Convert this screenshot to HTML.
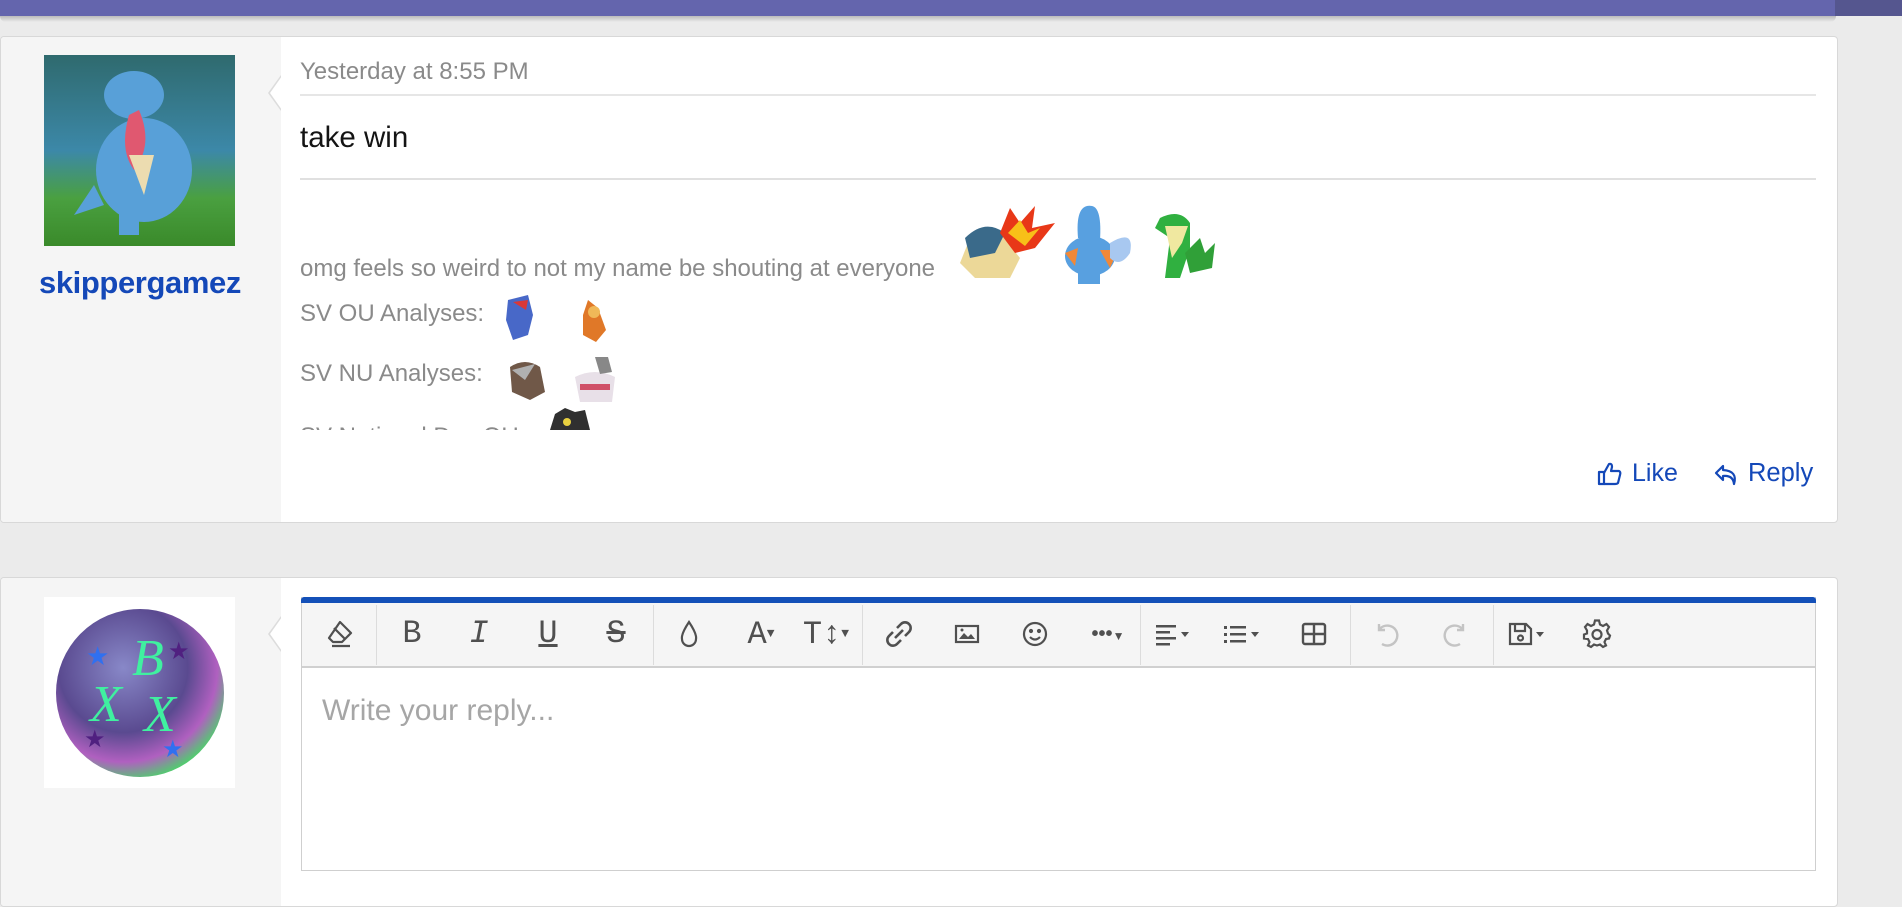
<!DOCTYPE html>
<html><head><meta charset="utf-8"><style>
*{margin:0;padding:0;box-sizing:border-box}
body{width:1902px;height:888px;background:#ebebeb;position:relative;overflow:hidden;font-family:"Liberation Sans",Arial,sans-serif}
.abs{position:absolute}
.bar{left:0;top:0;width:1902px;height:16px;background:#6465ad}
.bar2{left:1835px;top:0;width:67px;height:16px;background:#55568f}
.shadow{left:0;top:16px;width:1836px;height:6px;background:linear-gradient(#bbb,#ebebeb);border-radius:0 0 6px 6px}
.card{background:#fff;border:1px solid #d8d8d8;border-radius:4px;overflow:hidden}
.side{background:#f5f5f5}
.t{white-space:nowrap}
.sig{color:#8a8a8a;font-size:24px}
.ico{position:absolute;top:618px;width:32px;height:32px}
.sep{position:absolute;top:605px;width:1px;height:60px;background:#dcdcdc}
.g{position:absolute;top:614px;font-size:32px;color:#505050;line-height:40px;text-align:center;width:40px}
</style></head><body>
<div class="abs bar"></div><div class="abs bar2"></div><div class="abs shadow"></div>

<div class="abs card" style="left:0;top:36px;width:1838px;height:487px">
  <div class="abs side" style="left:0;top:0;width:280px;height:487px"></div>
</div>
<div class="abs" style="left:268px;top:75px;width:0;height:0;border-top:18px solid transparent;border-bottom:18px solid transparent;border-right:13px solid #dcdcdc"></div>
<div class="abs" style="left:270px;top:76px;width:0;height:0;border-top:17px solid transparent;border-bottom:17px solid transparent;border-right:12px solid #fff"></div>
<svg class="abs" style="left:44px;top:55px" width="191" height="191" viewBox="0 0 191 191">
<defs><linearGradient id="bg1" x1="0" y1="0" x2="0" y2="1"><stop offset="0" stop-color="#2f6a6e"/><stop offset=".5" stop-color="#3c88a8"/><stop offset=".75" stop-color="#4aa040"/><stop offset="1" stop-color="#3a8a2a"/></linearGradient></defs>
<rect width="191" height="191" fill="url(#bg1)"/>
<ellipse cx="100" cy="115" rx="48" ry="52" fill="#58a0d8"/>
<ellipse cx="90" cy="40" rx="30" ry="24" fill="#58a0d8"/>
<path d="M95 55 Q110 90 90 115 Q75 95 85 60Z" fill="#e05870"/>
<path d="M85 100 L110 100 L100 140Z" fill="#ecdcb0"/>
<rect x="75" y="150" width="20" height="30" fill="#58a0d8"/>
<path d="M50 130 L30 160 L60 150Z" fill="#58a0d8"/>
</svg>
<div class="abs t" style="left:39px;top:265px;font-size:31px;font-weight:bold;color:#1448b8;letter-spacing:-0.4px">skippergamez</div>

<div class="abs t" style="left:300px;top:58px;font-size:24px;color:#8a8a8a">Yesterday at 8:55 PM</div>
<div class="abs" style="left:300px;top:94px;width:1516px;height:2px;background:#e6e6e6"></div>
<div class="abs t" style="left:300px;top:121px;font-size:29.5px;color:#141414">take win</div>
<div class="abs" style="left:300px;top:178px;width:1516px;height:2px;background:#e0e0e0"></div>

<div class="abs t sig" style="left:300px;top:255px">omg feels so weird to not my name be shouting at everyone</div>
<svg class="abs" style="left:950px;top:198px" width="290" height="90">
<path d="M20 40 L50 35 L70 60 L60 80 L25 80 L10 65Z" fill="#ecd898"/>
<path d="M15 40 Q35 20 55 35 L45 55 L20 60Z" fill="#3a6a8a"/>
<path d="M50 35 L60 10 L70 25 L85 8 L82 30 L105 25 L85 50 L65 55Z" fill="#e83818"/>
<path d="M58 35 L70 22 L78 35 L90 30 L75 48Z" fill="#f8c018"/>
<path d="M128 40 Q125 5 142 8 Q152 10 150 42Z" fill="#58a0e0"/>
<ellipse cx="140" cy="58" rx="25" ry="20" fill="#58a0e0"/>
<path d="M115 55 L128 50 L125 68Z M150 52 L168 52 L160 70Z" fill="#f08838"/>
<path d="M160 45 Q185 30 180 55 Q170 70 160 60Z" fill="#a8c8f0"/>
<rect x="128" y="72" width="22" height="14" fill="#58a0e0"/>
<path d="M210 20 Q230 10 240 25 L240 50 L230 80 L215 80 L220 40 L205 30Z" fill="#30b040"/>
<path d="M215 28 L238 28 L232 45 L222 60Z" fill="#f0e8a0"/>
<path d="M235 55 L250 40 L255 55 L265 45 L262 70 L240 75Z" fill="#30a038"/>
</svg>
<div class="abs t sig" style="left:300px;top:300px">SV OU Analyses:</div>
<svg class="abs" style="left:498px;top:290px" width="130" height="56">
<path d="M10 10 L30 5 L35 25 L30 45 L15 50 L8 30Z" fill="#4868c8"/><path d="M15 12 L30 10 L28 20Z" fill="#d83838"/>
<path d="M90 10 L100 18 L108 40 L98 52 L85 45 L85 25Z" fill="#e07828"/><circle cx="96" cy="22" r="6" fill="#f0b858"/>
</svg>
<div class="abs t sig" style="left:300px;top:360px">SV NU Analyses:</div>
<svg class="abs" style="left:500px;top:352px" width="130" height="56">
<path d="M10 15 Q25 5 40 15 L45 40 L30 48 L12 40Z" fill="#705848"/><path d="M12 18 L35 12 L25 28Z" fill="#b0b0b0"/>
<path d="M75 25 Q95 15 115 25 L112 50 L80 50Z" fill="#e8e0e8"/><path d="M80 35 L110 35" stroke="#d05068" stroke-width="6"/><path d="M95 5 L108 5 L112 20 L100 22Z" fill="#888"/>
</svg>
<div class="abs" style="left:300px;top:418px;width:250px;height:12px;overflow:hidden">
<div class="t sig" style="margin-top:5px">SV National Dex OU:</div></div>
<svg class="abs" style="left:545px;top:406px" width="50" height="24"><path d="M5 24 L10 8 L20 2 L30 6 L40 4 L45 24Z" fill="#303030"/><circle cx="22" cy="16" r="4" fill="#e8d040"/></svg>

<svg class="abs" style="left:1597px;top:461px" width="26" height="26" viewBox="0 0 26 26" fill="none" stroke="#1448b8" stroke-width="2.2" stroke-linejoin="round"><rect x="2" y="11" width="5" height="12"/><path d="M7 12 L12 3 Q15 2 15 6 L14 10 L22 10 Q24 11 23 14 L21 22 Q20 23 18 23 L7 23"/></svg>
<div class="abs t" style="left:1632px;top:459px;font-size:25px;color:#1448b8">Like</div>
<svg class="abs" style="left:1713px;top:462px" width="26" height="26" viewBox="0 0 26 26" fill="none" stroke="#1448b8" stroke-width="2.2" stroke-linejoin="round"><path d="M10 4 L3 11 L10 18 L10 14 Q20 13 21 22 Q25 9 10 8Z"/></svg>
<div class="abs t" style="left:1748px;top:459px;font-size:25.5px;color:#1448b8">Reply</div>

<div class="abs card" style="left:0;top:577px;width:1838px;height:330px">
  <div class="abs side" style="left:0;top:0;width:280px;height:330px"></div>
</div>
<div class="abs" style="left:268px;top:616px;border-top:18px solid transparent;border-bottom:18px solid transparent;border-right:13px solid #dcdcdc"></div>
<div class="abs" style="left:270px;top:617px;border-top:17px solid transparent;border-bottom:17px solid transparent;border-right:12px solid #fff"></div>
<div class="abs" style="left:44px;top:597px;width:191px;height:191px;background:#fff"></div>
<svg class="abs" style="left:44px;top:597px" width="191" height="191" viewBox="0 0 191 191">
<defs><radialGradient id="orb" cx=".4" cy=".35" r=".7"><stop offset="0" stop-color="#8888c8"/><stop offset=".55" stop-color="#5a4a90"/><stop offset=".8" stop-color="#b060c0"/><stop offset="1" stop-color="#40e060"/></radialGradient></defs>
<circle cx="96" cy="96" r="84" fill="url(#orb)"/>
<text x="88" y="78" font-family="Liberation Serif" font-style="italic" font-size="52" fill="#40f0a0">B</text>
<text x="46" y="124" font-family="Liberation Serif" font-style="italic" font-size="52" fill="#40f0a0">X</text>
<text x="100" y="134" font-family="Liberation Serif" font-style="italic" font-size="52" fill="#40f0a0">X</text>
<text x="42" y="68" font-size="26" fill="#3070f0">★</text><text x="124" y="62" font-size="24" fill="#502080">★</text>
<text x="40" y="150" font-size="24" fill="#502080">★</text><text x="118" y="160" font-size="24" fill="#3070f0">★</text>
</svg>

<div class="abs" style="left:301px;top:597px;width:1515px;height:274px;border:1px solid #cfcfcf;border-top:none;background:#fff"></div>
<div class="abs" style="left:301px;top:597px;width:1515px;height:6px;background:#1450b8;border-radius:3px 3px 0 0"></div>
<div class="abs" style="left:302px;top:603px;width:1513px;height:65px;background:#f5f5f5;border-bottom:2px solid #d0d0d0"></div>
<div class="sep" style="left:376px"></div><div class="sep" style="left:653px"></div><div class="sep" style="left:862px"></div><div class="sep" style="left:1140px"></div><div class="sep" style="left:1350px"></div><div class="sep" style="left:1493px"></div>

<svg class="ico" style="left:324px" viewBox="0 0 32 32" fill="none" stroke="#505050" stroke-width="2.2" stroke-linejoin="round"><path d="M16 4 L27 15 L18 24 L9 24 L5 20 Z M10 10 L21 21 M8 28 L26 28"/></svg>
<div class="g" style="left:392px;font-family:'Liberation Mono',monospace">B</div>
<div class="g" style="left:459px;font-family:'Liberation Mono',monospace;font-style:italic">I</div>
<div class="g" style="left:528px;font-family:'Liberation Mono',monospace;text-decoration:underline">U</div>
<div class="g" style="left:596px;font-family:'Liberation Mono',monospace;text-decoration:line-through">S</div>
<svg class="ico" style="left:673px" viewBox="0 0 32 32" fill="none" stroke="#505050" stroke-width="2.2"><path d="M16 4 Q24 16 23 21 A7 7 0 0 1 9 21 Q8 16 16 4Z"/></svg>
<div class="g" style="left:733px;width:56px;font-family:'Liberation Mono',monospace">A<span style="font-size:13px;vertical-align:6px">▼</span></div>
<div class="g" style="left:798px;width:56px;font-family:'Liberation Mono',monospace">T↕<span style="font-size:13px;vertical-align:6px">▼</span></div>
<svg class="ico" style="left:883px" viewBox="0 0 32 32" fill="none" stroke="#505050" stroke-width="2.6"><path d="M14 10 L18 6 A5 5 0 0 1 26 14 L22 18 M18 22 L14 26 A5 5 0 0 1 6 18 L10 14 M12 20 L20 12"/></svg>
<svg class="ico" style="left:951px" viewBox="0 0 32 32"><rect x="5" y="8" width="22" height="16" fill="none" stroke="#505050" stroke-width="2.2"/><path d="M8 21 L13 15 L17 19 L20 16 L24 21Z" fill="#505050"/><circle cx="11" cy="12" r="1.5" fill="#505050"/></svg>
<svg class="ico" style="left:1019px" viewBox="0 0 32 32" fill="none" stroke="#505050" stroke-width="2.2"><circle cx="16" cy="16" r="11"/><circle cx="12" cy="13" r="1" fill="#505050"/><circle cx="20" cy="13" r="1" fill="#505050"/><path d="M11 19 Q16 24 21 19"/></svg>
<div class="g" style="left:1080px;width:56px;font-size:20px;font-weight:bold">•••<span style="font-size:12px">▼</span></div>
<svg class="ico" style="left:1153px;width:50px" viewBox="0 0 50 32" fill="#505050"><rect x="3" y="7" width="20" height="2.5"/><rect x="3" y="13" width="14" height="2.5"/><rect x="3" y="19" width="20" height="2.5"/><rect x="3" y="25" width="14" height="2.5"/><path d="M28 14 L36 14 L32 19Z"/></svg>
<svg class="ico" style="left:1222px;width:50px" viewBox="0 0 50 32" fill="#505050"><rect x="2" y="8" width="3" height="3"/><rect x="8" y="8" width="16" height="2.5"/><rect x="2" y="15" width="3" height="3"/><rect x="8" y="15" width="16" height="2.5"/><rect x="2" y="22" width="3" height="3"/><rect x="8" y="22" width="16" height="2.5"/><path d="M29 14 L37 14 L33 19Z"/></svg>
<svg class="ico" style="left:1298px" viewBox="0 0 32 32" fill="none" stroke="#505050" stroke-width="2.4"><rect x="5" y="6" width="22" height="20" rx="2"/><path d="M5 16 L27 16 M16 6 L16 26"/></svg>
<svg class="ico" style="left:1370px" viewBox="0 0 32 32" fill="none" stroke="#c4c4c4" stroke-width="2.4"><path d="M9 6 L9 12 L15 12 M9 12 A10 10 0 1 1 12 26"/></svg>
<svg class="ico" style="left:1440px" viewBox="0 0 32 32" fill="none" stroke="#c4c4c4" stroke-width="2.4"><path d="M23 6 L23 12 L17 12 M23 12 A10 10 0 1 0 20 26"/></svg>
<svg class="ico" style="left:1505px;width:50px" viewBox="0 0 50 32" fill="none" stroke="#505050" stroke-width="2.2"><path d="M5 6 L21 6 L26 11 L26 26 L5 26Z M10 6 L10 13 L20 13 L20 6"/><circle cx="15.5" cy="20" r="2.5"/><path d="M31 14 L39 14 L35 19Z" fill="#505050" stroke="none"/></svg>
<svg class="ico" style="left:1581px" viewBox="0 0 32 32" fill="none" stroke="#505050" stroke-width="2.2"><path d="M14 3 L18 3 L19 7 L22 8.5 L25.5 6.5 L28 9.5 L26 13 L27 16 L29 18 L28 21 L25 21.5 L23.5 24.5 L25 28 L22 29.5 L19 27 L16 28 L13 27 L10 29.5 L7 28 L8.5 24.5 L7 21.5 L3 21 L3 17 L6 16 L6 13 L4 9.5 L6.5 6.5 L10 8.5 L13 7Z" transform="translate(0,-0.5)"/><circle cx="16" cy="16.5" r="4.5"/></svg>

<div class="abs t" style="left:322px;top:694px;font-size:30px;color:#a6a6a6">Write your reply...</div>
</body></html>
